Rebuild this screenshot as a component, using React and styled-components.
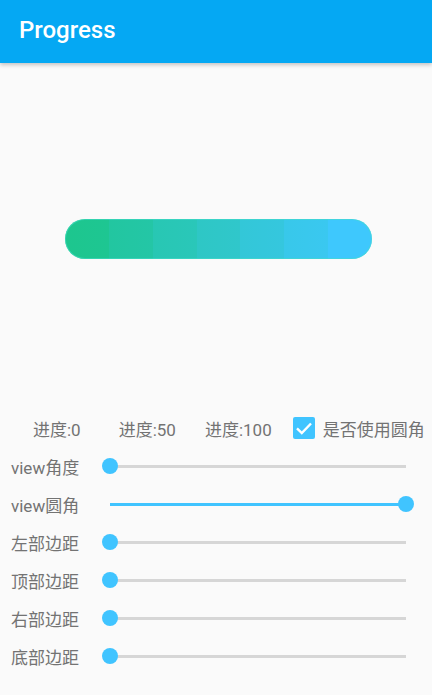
import React from "react";
import styled, { createGlobalStyle } from "styled-components";

const Global = createGlobalStyle`
  html, body { margin: 0; padding: 0; background: #FAFAFA; }
  body { font-family: Roboto, "Noto Sans CJK SC", sans-serif; }
  * { box-sizing: border-box; }
`;

const Page = styled.div`
  width: 432px;
  height: 695px;
  background: #FAFAFA;
  overflow: hidden;
`;

const AppBar = styled.header`
  height: 63px;
  background: #05A8F3;
  display: flex;
  align-items: center;
  padding-left: 19px;
  box-shadow: 0 2px 4px rgba(0, 0, 0, 0.22);
  position: relative;
  z-index: 1;
`;

const Title = styled.h1`
  margin: 0;
  color: #ffffff;
  font-family: Roboto, sans-serif;
  font-weight: 500;
  font-size: 24px;
  line-height: 1;
  padding-bottom: 4px;
`;

const Content = styled.main`
  display: flex;
  flex-direction: column;
`;

const BarWrap = styled.div`
  margin-top: 156px;
  margin-left: 65px;
  width: 307px;
  height: 40px;
`;

const GradientBar = styled.div`
  width: 100%;
  height: 100%;
  border-radius: 20px;
  box-shadow: inset 0 0 0 1px rgba(70, 222, 200, 0.55);
  background: linear-gradient(
    to right,
    #1DC68E 0%, #1EC692 14.28%,
    #22C6A0 14.28%, #24C6A6 28.57%,
    #28C7B3 28.57%, #2AC7B9 42.85%,
    #2EC7C5 42.85%, #30C7CB 57.14%,
    #33C7D8 57.14%, #35C7DE 71.42%,
    #38C8EA 71.42%, #3AC8F0 85.71%,
    #3EC8FD 85.71%, #3EC8FD 100%
  );
`;

const ControlRow = styled.div`
  margin-top: 150px;
  height: 38px;
  display: flex;
  align-items: center;
`;

const ProgressLabel = styled.span`
  font-family: Roboto, "Noto Sans CJK SC", sans-serif;
  font-size: 17px;
  color: #737373;
  margin-left: ${(p) => p.$ml}px;
  white-space: nowrap;
`;

const CheckBox = styled.span`
  width: 22px;
  height: 22px;
  border-radius: 2px;
  background: #40C4FF;
  margin-left: 21px;
  display: flex;
  align-items: center;
  justify-content: center;
`;

const CheckText = styled.span`
  font-family: "Noto Sans CJK SC", sans-serif;
  font-size: 17px;
  color: #737373;
  margin-left: 8px;
  white-space: nowrap;
`;

const SliderRow = styled.div`
  height: 38px;
  display: flex;
  align-items: center;
`;

const RowLabel = styled.span`
  width: 110px;
  padding-left: 11px;
  font-family: Roboto, "Noto Sans CJK SC", sans-serif;
  font-size: 17px;
  color: #737373;
  white-space: nowrap;
`;

const Track = styled.div`
  position: relative;
  width: 296px;
  height: 3px;
  background: ${(p) => (p.$full ? "#40C4FF" : "#D6D6D6")};
`;

const Thumb = styled.span`
  position: absolute;
  top: 50%;
  width: 16px;
  height: 16px;
  border-radius: 50%;
  background: #40C4FF;
  transform: translate(-50%, -50%);
`;

const Slider = ({ value }) => (
  <Track $full={value >= 1}>
    <Thumb style={{ left: `${value * 100}%` }} />
  </Track>
);

const rows = [
  { label: "view角度", value: 0 },
  { label: "view圆角", value: 1 },
  { label: "左部边距", value: 0 },
  { label: "顶部边距", value: 0 },
  { label: "右部边距", value: 0 },
  { label: "底部边距", value: 0 },
];

export default function App() {
  return (
    <Page>
      <Global />
      <AppBar>
        <Title>Progress</Title>
      </AppBar>
      <Content>
        <BarWrap>
          <GradientBar />
        </BarWrap>
        <ControlRow>
          <ProgressLabel $ml={33}>进度:0</ProgressLabel>
          <ProgressLabel $ml={38}>进度:50</ProgressLabel>
          <ProgressLabel $ml={29}>进度:100</ProgressLabel>
          <CheckBox>
            <svg width="22" height="22" viewBox="0 0 22 22">
              <path d="M4 11.3 L8.8 16 L18 6.5" fill="none" stroke="#fff" strokeWidth="2.4" />
            </svg>
          </CheckBox>
          <CheckText>是否使用圆角</CheckText>
        </ControlRow>
        {rows.map((r) => (
          <SliderRow key={r.label}>
            <RowLabel>{r.label}</RowLabel>
            <Slider value={r.value} />
          </SliderRow>
        ))}
      </Content>
    </Page>
  );
}
